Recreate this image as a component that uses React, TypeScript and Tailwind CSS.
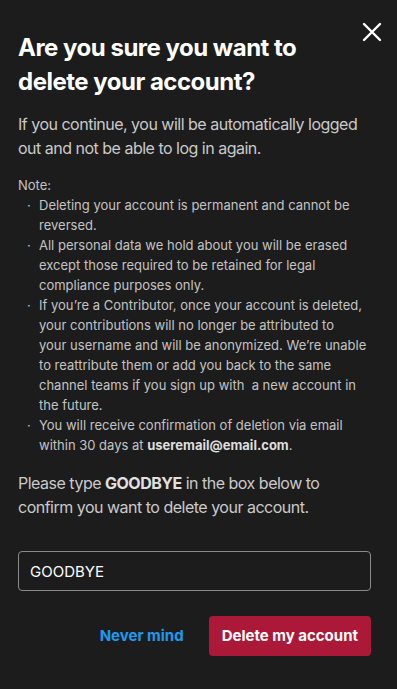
export default function App() {
  const notes = [
    <>Deleting your account is permanent and cannot be<br />reversed.</>,
    <>
      All personal data we hold about you will be erased<br />except those required to be retained for legal<br />
      compliance purposes only.
    </>,
    <>
      If you’re a Contributor, once your account is deleted,<br />your contributions will no longer be attributed to<br />
      your username and will be anonymized. We’re unable<br />to reattribute them or add you back to the same<br />
      channel teams if you sign up with&nbsp; a new account in<br />the future.
    </>,
    <>
      You will receive confirmation of deletion via email<br />within 30 days at{" "}
      <span className="font-bold text-[#dedede]">useremail@email.com</span>.
    </>,
  ];

  return (
    <div className="min-h-screen w-[397px] bg-[#1c1c1c] font-['Inter',sans-serif] relative">
      {/* close */}
      <button className="absolute left-[362px] top-[22px] text-white">
        <svg width="20" height="20" viewBox="0 0 20 20" fill="none" stroke="currentColor" strokeWidth="2.4" strokeLinecap="round">
          <path d="M2 2L18 18M18 2L2 18" />
        </svg>
      </button>

      <div className="pl-[18px] pr-[26px] pt-[31px] pb-8">
        <h1 className="pr-[30px] text-[24px] leading-[34px] font-bold text-white tracking-[-0.5px]">
          Are you sure you want to delete your account?
        </h1>

        <p className="mt-[13px] text-[16px] leading-[24px] text-[#cacaca] tracking-[-0.5px]">
          If you continue, you will be automatically logged out and not be able to log in again.
        </p>

        <div className="mt-[15px] text-[13px] leading-[20px] text-[#c4c4c4] whitespace-nowrap">
          <p>Note:</p>
          <ul>
            {notes.map((n, i) => (
              <li key={i} className="flex">
                <span className="w-[21px] shrink-0 pl-[9px]">·</span>
                <span>{n}</span>
              </li>
            ))}
          </ul>
        </div>

        <p className="mt-[16px] text-[16px] leading-[24px] text-[#cacaca] tracking-[-0.5px]">
          Please type <span className="font-bold text-[#e0e0e0]">GOODBYE</span> in the box below to confirm you want to
          delete your account.
        </p>

        <input
          defaultValue="GOODBYE"
          className="mt-[32px] block w-full h-[40px] rounded-[4px] border border-[#8a8a8a] bg-transparent px-[11px] text-[15px] text-white outline-none"
        />

        <div className="mt-[25px] flex items-center justify-end gap-[25px]">
          <button className="text-[15px] font-bold text-[#1a9bf0]">Never mind</button>
          <button className="h-[40px] rounded-[4px] bg-[#ab1838] px-[13px] text-[15px] font-bold text-white">
            Delete my account
          </button>
        </div>
      </div>
    </div>
  );
}
